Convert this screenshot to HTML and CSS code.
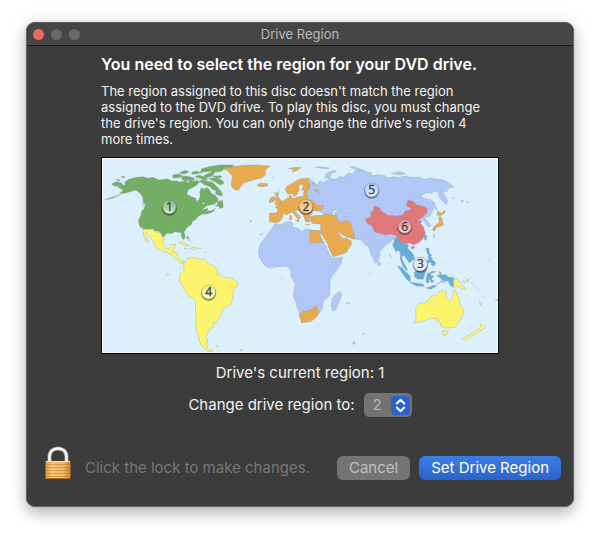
FILE: index.html
```html
<!DOCTYPE html>
<html lang="en">
<head>
<meta charset="utf-8">
<title>Drive Region</title>
<link rel="stylesheet" href="styles.css">
</head>
<body>
<main class="window">
  <header class="titlebar">
    <div class="lights">
      <button class="light light-close" type="button" aria-label="Close"></button>
      <button class="light" type="button" aria-label="Minimize" disabled></button>
      <button class="light" type="button" aria-label="Zoom" disabled></button>
    </div>
    <span class="title">Drive Region</span>
  </header>
  <form class="content">
    <section class="intro">
      <h1>You need to select the region for your DVD drive.</h1>
      <p>The region assigned to this disc doesn't match the region assigned to the DVD drive. To play this disc, you must change the drive's region. You can only change the drive's region 4 more times.</p>
      <svg class="map" viewBox="0 0 1188 585" role="img" aria-label="World map of DVD regions">
        <defs>
          <linearGradient id="shine" x1="0" y1="0" x2="0" y2="1">
            <stop offset="0" stop-color="#fff" stop-opacity=".25"/>
            <stop offset=".5" stop-color="#fff" stop-opacity=".35"/>
            <stop offset="1" stop-color="#fff" stop-opacity=".8"/>
          </linearGradient>
        </defs>
        <!-- Region 5: Russia, Central Asia, India -->
        <g class="r5" transform="translate(744 -18)">
          <path d="M-125 78L-116 84L-106 94L-110 100L-98 98L-90 86L-84 92L-72 88L-60 78L-50 82L-38 80L-30 72L-20 78L-10 66L0 62L8 68L14 58L28 54L42 56L50 60L66 63L62 72L84 68L108 72L112 78L130 74L148 77L160 72L184 76L208 76L222 82L240 79L262 82L280 84L298 94L311 105L300 107L290 112L292 119L279 116L282 128L292 144L290 159L280 150L270 138L264 120L252 116L246 124L228 122L214 132L218 138L234 142L246 158L250 172L240 192L228 196L222 202L232 206L243 222L236 225L226 214L218 200L180 230L145 270L127 261L122 270L108 278L94 294L87 300L90 309L82 330L76 333L64 310L55 282L47 280L34 264L14 261L-30 235L-60 210L-95 183L-90 165L-135 150L-136 118L-125 105L-122 90Z"/>
          <path d="M-76 78L-70 64L-52 56L-40 57L-58 66L-60 78ZM0 45L12 44L30 51L40 56L26 56ZM125 64L150 59L166 64L148 69ZM238 140L252 151L262 174L255 169ZM86 327L92 336L88 342L83 338ZM-105 46L-90 44L-62 48L-72 51Z"/>
          <circle cx="310" cy="138" r="2"/><circle cx="337" cy="147" r="3"/><circle cx="352" cy="150" r="2"/>
          <path class="sea" d="M-53 178L-38 170L-38 178L-46 182L-43 197L-36 202L-36 218L-46 214L-48 198ZM-13 171L-7 175L-10 184L-14 180ZM-119 186L-112 174L-98 174L-76 187L-90 194Z"/>
        </g>
        <!-- Region 5: Africa -->
        <g class="r5" transform="translate(444 246)">
          <path d="M75 -49L92 -46L110 -54L126 -54L128 -38L146 -34L155 -25L166 -34L190 -28L212 -26L218 2L232 30L245 54L260 55L278 51L274 68L264 86L248 106L240 119L239 166L220 184L216 207L205 222L178 222L150 225L144 208L137 186L130 166L136 132L123 110L123 88L108 79L82 80L56 84L43 75L28 52L25 34L31 12L54 -18Z"/>
          <path d="M269 153L275 166L258 208L249 212L243 198L248 173Z"/>
          <circle cx="290" cy="191" r="2"/><circle cx="298" cy="188" r="2"/><circle cx="312" cy="309" r="4"/><circle cx="340" cy="282" r="2"/><circle cx="95" cy="116" r="1"/><circle cx="360" cy="100" r="1"/>
          <path class="r2" d="M147 223L156 220L160 208L164 216L184 208L199 196L207 215L202 228L184 244L155 249Z"/>
        </g>
        <!-- Region 2: Greenland, Europe, Middle East -->
        <g class="r2" transform="translate(354 -18)">
          <path d="M10 50L28 45L70 40L110 39L151 42L135 55L137 67L125 78L98 84L70 93L55 115L46 114L35 104L34 88L38 73L22 56ZM112 98L122 93L142 95L143 101L125 105L113 102ZM205 50L225 46L244 47L226 58L216 59L222 53Z"/>
          <path d="M196 115L200 103L220 92L240 80L262 78L270 96L268 114L257 119L245 113L250 103L246 95L236 101L238 113L230 128L222 134L216 124L204 127ZM212 128L216 138L224 139L235 134L252 132L250 120L261 119L263 140L284 150L290 160L310 160L308 172L291 178L280 174L276 183L270 187L272 199L265 196L270 208L257 210L251 191L235 175L223 176L242 195L236 204L217 180L200 188L190 184L188 196L178 210L164 212L148 209L149 183L171 182L174 172L166 166L184 150L200 140ZM164 122L176 122L174 134L186 148L183 156L164 158L168 150L164 141L170 134ZM154 136L165 133L162 149L148 152L148 143ZM226 204L236 204L237 211ZM210 190L215 192L214 204L208 204ZM256 216L270 217L262 219ZM276 94L286 94L290 100L283 97ZM280 110L296 116L288 118ZM291 124L298 123L295 126Z"/>
          <path d="M272 194L290 190L308 189L320 185L338 190L350 190L350 202L362 212L374 206L388 207L396 223L398 240L405 250L402 262L385 256L369 249L356 239L358 246L370 260L378 257L394 268L395 276L378 302L340 315L326 287L302 248L302 216L287 215L279 215L271 206ZM270 234L301 236L298 244L310 271L270 273Z"/>
          <path class="sea" d="M299 246L304 246L326 280L322 286L308 266ZM354 239L360 242L370 258L364 258Z"/>
          <circle cx="157" cy="78" r="1"/><circle cx="178" cy="114" r="1"/><circle cx="92" cy="207" r="2"/>
          <path class="r5" d="M118 246L124 248L130 244L122 249ZM91 299L95 302"/>
        </g>
        <!-- Region 2: Japan -->
        <g class="r2" transform="translate(744 -18)">
          <path d="M262 178L274 183L284 175L286 180L272 192L262 190ZM266 195L274 195L281 218L268 224L259 226L255 237L248 235L250 226L268 210ZM251 250L253 245L252 257Z"/>
        </g>
        <!-- Region 1: North America -->
        <g class="r1" transform="translate(-18 -18)">
          <path d="M65 105L72 100L88 99L86 91L98 82L120 76L142 74L155 79L170 76L190 84L215 80L228 87L242 86L250 90L268 86L282 83L294 87L304 83L306 97L292 106L278 112L272 126L286 134L300 139L302 150L309 142L313 133L311 120L316 107L326 112L332 106L340 113L345 123L360 132L368 144L355 157L332 161L318 173L336 169L334 178L350 175L359 168L351 180L329 187L320 186L307 193L300 202L288 209L288 216L272 228L264 241L268 253L263 263L256 253L256 242L246 241L238 239L224 245L213 243L202 256L190 238L178 237L170 230L151 232L140 229L131 223L127 206L134 191L137 177L144 170L149 160L142 152L140 135L132 123L118 114L103 119L86 124L70 124L82 115Z"/>
          <path d="M310 87L322 82L335 88L350 91L360 101L375 118L381 129L374 132L358 126L360 116L348 112L342 104L324 98ZM231 68L251 66L260 72L250 77L230 78ZM256 74L272 72L292 77L296 83L270 86L258 83ZM286 61L304 57L314 64L290 67ZM313 64L316 51L338 44L370 39L412 39L410 45L388 47L376 58L357 61L349 72L333 77L322 72L350 58L320 60ZM338 80L350 77L370 80L382 88L383 95L373 99L354 88ZM296 73L310 70L330 76L335 83L316 81ZM304 87L313 90L306 93ZM362 150L379 145L382 165L372 170L369 163L358 162L366 156ZM46 96L61 89L77 93L80 99L58 103L50 99ZM40 138L54 134L76 126L52 138L30 143ZM60 82L73 84L65 88ZM76 74L85 73L87 76L79 78ZM350 72L375 71L378 76L360 79ZM250 62L268 55L280 60L262 67Z"/>
          <path class="sea" d="M137 154L144 158L147 164L141 163ZM319 151L329 153L321 157ZM270 90L279 84L280 92ZM293 79L305 78L299 89Z"/>
          <path d="M25 142L29 142M29 274L32 272M36 280L39 281M269 258L276 253L281 267L277 261M286 270L288 272"/>
        </g>
        <!-- Region 4: Central America and Caribbean -->
        <g class="r4" transform="translate(-18 -18)">
          <path d="M140 231L150 232L170 232L178 240L190 241L203 258L201 276L211 291L222 288L226 278L239 276L233 291L231 300L242 301L249 323L264 325L264 331L254 334L242 322L225 306L211 301L190 294L178 286L176 275L160 250L151 241L148 244L155 265L158 271L148 265L143 251ZM246 272L258 268L280 281L264 279ZM283 288L298 286L308 290L294 293L282 291ZM264 289L273 289L270 291ZM311 289L319 290"/>
        </g>
        <!-- Region 4: South America -->
        <g class="r4" transform="translate(-18 276)">
          <path d="M256 36L266 38L275 26L292 22L306 27L327 28L335 40L358 50L366 66L362 76L370 70L378 80L405 84L425 95L424 107L412 122L410 146L404 163L380 178L378 192L361 218L350 218L354 224L352 233L340 235L342 244L332 247L336 252L329 262L336 270L331 278L337 283L331 289L338 297L350 300L349 305L334 304L318 288L311 276L304 250L300 238L298 150L277 137L263 116L256 98L250 96L251 74L264 61L264 43Z"/>
          <circle cx="215" cy="74" r="3"/><circle cx="364" cy="289" r="3"/><circle cx="436" cy="300" r="3"/><circle cx="328" cy="7" r="1"/>
        </g>
        <!-- Region 6: China -->
        <g class="r6" transform="translate(744 -18)">
          <path d="M45 202L62 194L62 180L70 177L73 161L90 168L92 176L106 184L112 190L140 192L160 188L164 178L180 174L184 168L168 162L174 144L192 149L200 159L222 164L232 169L230 183L218 196L201 205L208 207L217 206L212 214L220 225L226 242L218 261L206 272L190 278L178 273L164 276L156 273L154 278L147 274L143 252L120 246L108 249L74 240L66 222L50 212ZM184 283L195 284L189 292L184 289Z"/>
        </g>
        <!-- Region 3: Southeast Asia -->
        <g class="r3" transform="translate(804 246)">
          <path d="M68 15L76 -6L84 -13L84 2L95 9L104 8L116 16L112 24L130 43L134 56L128 61L118 69L108 54L102 46L96 48L96 58L102 70L112 87L110 92L98 78L91 55L92 42L86 30L78 36ZM82 77L94 82L120 108L122 124L114 122L96 98ZM118 127L132 128L158 132L164 139L140 138ZM133 96L148 90L157 72L166 68L172 82L168 92L159 118L144 117L134 112ZM168 24L176 25L178 40L186 47L181 50L171 38ZM170 62L180 56L192 62L198 70L191 79L184 75L184 66L174 70ZM176 44L180 52L188 55L184 60L174 54ZM172 101L188 94L199 95L180 101L184 107L192 108L184 116L192 124L184 128L178 114L176 128L170 128L168 118ZM208 93L214 99L210 107ZM200 106L228 104L234 111L252 114L250 142L240 136L235 122L222 124L214 117ZM168 144L192 136L200 138L182 148ZM150 61L145 76L142 74ZM163 -17L170 -14L168 2L163 -2ZM60 42L62 54ZM212 121L224 128L214 126ZM200 132L212 129Z"/>
        </g>
        <!-- Region 4: Australia, New Guinea, New Zealand -->
        <g class="r4" transform="translate(804 246)">
          <path d="M251 114L264 120L270 128L284 142L286 149L275 147L265 138L250 142ZM276 122L292 122L297 116L292 128L278 127ZM286 112L297 122M303 129L314 134M314 138L327 149M326 183L336 193L332 196ZM340 168L346 172M376 180L384 178L384 184Z"/>
          <path d="M137 204L147 190L164 188L174 184L180 172L192 164L200 168L208 154L222 152L230 156L226 164L230 174L240 184L246 178L250 154L256 148L260 162L268 178L268 190L279 206L280 220L271 240L254 262L240 263L222 264L212 257L210 246L201 244L202 236L180 235L165 242L150 246L133 249L138 234ZM218 272L236 272L228 286L218 286ZM278 296L296 286L324 268L332 262L330 252L338 254L346 263L338 270L330 272L312 286L285 301Z"/>
          <circle cx="227" cy="71" r="1"/><circle cx="356" cy="58" r="1"/><circle cx="362" cy="66" r="1"/>
        </g>
        <!-- Region badges -->
        <g class="badges">
          <g transform="translate(202 147)"><circle class="shade" r="23" cy="3"/><circle class="b1" r="21"/><circle class="gloss" r="19"/><text y="13">1</text></g>
          <g transform="translate(612 145)"><circle class="shade" r="23" cy="3"/><circle class="b2" r="21"/><circle class="gloss" r="19"/><text y="13">2</text></g>
          <g transform="translate(955 318)"><circle class="shade" r="23" cy="3"/><circle class="b3" r="21"/><circle class="gloss" r="19"/><text y="13">3</text></g>
          <g transform="translate(320 402)"><circle class="shade" r="23" cy="3"/><circle class="b4" r="21"/><circle class="gloss" r="19"/><text y="13">4</text></g>
          <g transform="translate(809 96)"><circle class="shade" r="23" cy="3"/><circle class="b5" r="21"/><circle class="gloss" r="19"/><text y="13">5</text></g>
          <g transform="translate(908 205)"><circle class="shade" r="23" cy="3"/><circle class="b6" r="21"/><circle class="gloss" r="19"/><text y="13">6</text></g>
        </g>
      </svg>
    </section>
    <p class="current">Drive's current region: 1</p>
    <div class="change">
      <label for="region">Change drive region to:</label>
      <span class="picker">
        <select id="region" disabled>
          <option>1</option><option selected>2</option><option>3</option><option>4</option><option>5</option><option>6</option>
        </select>
        <svg class="arrows" viewBox="0 0 19 19" aria-hidden="true"><path d="M5.8 7.5L9.5 3.8L13.2 7.5M5.8 11.5L9.5 15.2L13.2 11.5"/></svg>
      </span>
    </div>
    <footer class="actions">
      <button class="lock" id="lock" type="button" aria-label="Unlock">
        <svg viewBox="0 0 28 34" aria-hidden="true">
          <defs>
            <linearGradient id="brass" x1="0" y1="0" x2="1" y2="0">
              <stop offset="0" stop-color="#d99a3c"/><stop offset=".25" stop-color="#f5c777"/><stop offset=".7" stop-color="#f0bb62"/><stop offset="1" stop-color="#ca8630"/>
            </linearGradient>
          </defs>
          <path d="M5.500 17V11C5.500 5.500 9 2.500 14 2.500S22.500 5.500 22.500 11V17" fill="none" stroke="#9b9b9b" stroke-width="4"/>
          <path d="M5.500 17V11C5.500 5.500 9 2.500 14 2.500S22.500 5.500 22.500 11V17" fill="none" stroke="#fafafa" stroke-width="2.500"/>
          <rect x="1.500" y="15" width="25" height="18" rx="1" fill="url(#brass)"/>
          <path d="M2 18.500H26M2 21.500H26M2 24.500H26M2 27.500H26M2 30.500H26" stroke="#b97a2b" stroke-opacity=".5"/>
          <path d="M2 15.500H26" stroke="#ffe0a0"/><path d="M2 32.500H26" stroke="#a86c25"/>
        </svg>
      </button>
      <label class="hint" for="lock">Click the lock to make changes.</label>
      <button class="push" type="button" disabled>Cancel</button>
      <button class="push push-default" type="submit">Set Drive Region</button>
    </footer>
  </form>
</main>
</body>
</html>
```

FILE: styles.css
```css
* { box-sizing: border-box; }
body {
  margin: 0;
  padding: 22px 26px 31px;
  background: #fff;
  color: #f2f2f2;
  font-family: Inter, "Liberation Sans", sans-serif;
  font-size: 15px;
  line-height: 20px;
}
button, select { margin: 0; border: 0; font: inherit; }
h1, p { margin: 0; }

.window {
  border: 1px solid #656565;
  border-radius: 9px;
  background: #3c3c3c;
  box-shadow: 0 0 1px #777, 0 8px 14px rgba(0, 0, 0, .2), 0 1px 20px rgba(0, 0, 0, .12);
}
.titlebar {
  display: grid;
  grid-template-columns: 1fr auto 1fr;
  align-items: center;
  height: 23px;
  padding: 0 6px;
  border-bottom: 1px solid #1c1c1c;
  border-radius: 8px 8px 0 0;
  background: #464646;
}
.lights { display: flex; gap: 7px; }
.light { width: 11px; height: 11px; padding: 0; border-radius: 50%; background: #696969; }
.light-close { background: #ee6a5f; }
.title { color: #b9b9b9; font-size: 13px; }

.content { display: flex; flex-direction: column; padding: 8px 12px 26px; }
.intro { margin: 0 62px; }
h1 { font-size: 16px; font-weight: 600; color: #fff; white-space: nowrap; }
.intro p { margin: 9px 0 10px; padding-right: 8px; font-size: 13px; line-height: 16px; }
.map { display: block; width: 100%; border: 1px solid #0a0a0a; background: #dcf0fc; box-shadow: inset 0 0 0 1px #f2faff; }
.map path, .map circle { stroke: #8499a8; stroke-width: 1; stroke-linejoin: round; }
.map .sea { fill: #dcf0fc; }
.r1 { fill: #74ae65; }
.r2 { fill: #e9a94e; }
.r3 { fill: #66acd8; }
.r4 { fill: #fbf46c; }
.r5 { fill: #b1c8f6; }
.r6 { fill: #df7878; }
.badges .shade { fill: #000; fill-opacity: .4; stroke: none; }
.badges .gloss { fill: url(#shine); stroke: none; }
.b1 { fill: #74ae65; }
.b2 { fill: #edae50; }
.b3 { fill: #c8dde8; }
.b4 { fill: #efe870; }
.b5 { fill: #a9c4ee; }
.b6 { fill: #df7878; }
.badges text { fill: #444; stroke: #444; font-family: "Open Sans", sans-serif; font-size: 36px; text-anchor: middle; }

.current { margin-top: 9px; text-align: center; }
.change { display: flex; align-items: center; justify-content: center; gap: 9px; margin-top: 10px; }
.picker { display: grid; align-items: center; }
.picker > * { grid-area: 1 / 1; }
select { appearance: none; width: 48px; height: 24px; padding: 0 0 0 9px; border-radius: 5px; background: #737373; color: #b5b5b5; opacity: 1; }
.arrows { justify-self: end; width: 19px; height: 19px; margin-right: 2px; border-radius: 4px; background: #2a63d0; fill: none; stroke: #fff; stroke-width: 2; stroke-linecap: round; stroke-linejoin: round; pointer-events: none; }

.actions { display: flex; align-items: flex-end; gap: 9px; margin-top: 28px; }
.lock { height: 35px; padding: 1px 4px 0 5px; background: none; }
.lock svg { display: block; width: 28px; height: 34px; }
.hint { flex: 1; color: #777; line-height: 24px; white-space: nowrap; }
.push { height: 24px; padding: 0 12px; border-radius: 6px; background: #747474; color: #c0c0c0; line-height: 20px; white-space: nowrap; }
.push-default { background: linear-gradient(#3b7de3, #2c64c8); color: #fff; }
```
